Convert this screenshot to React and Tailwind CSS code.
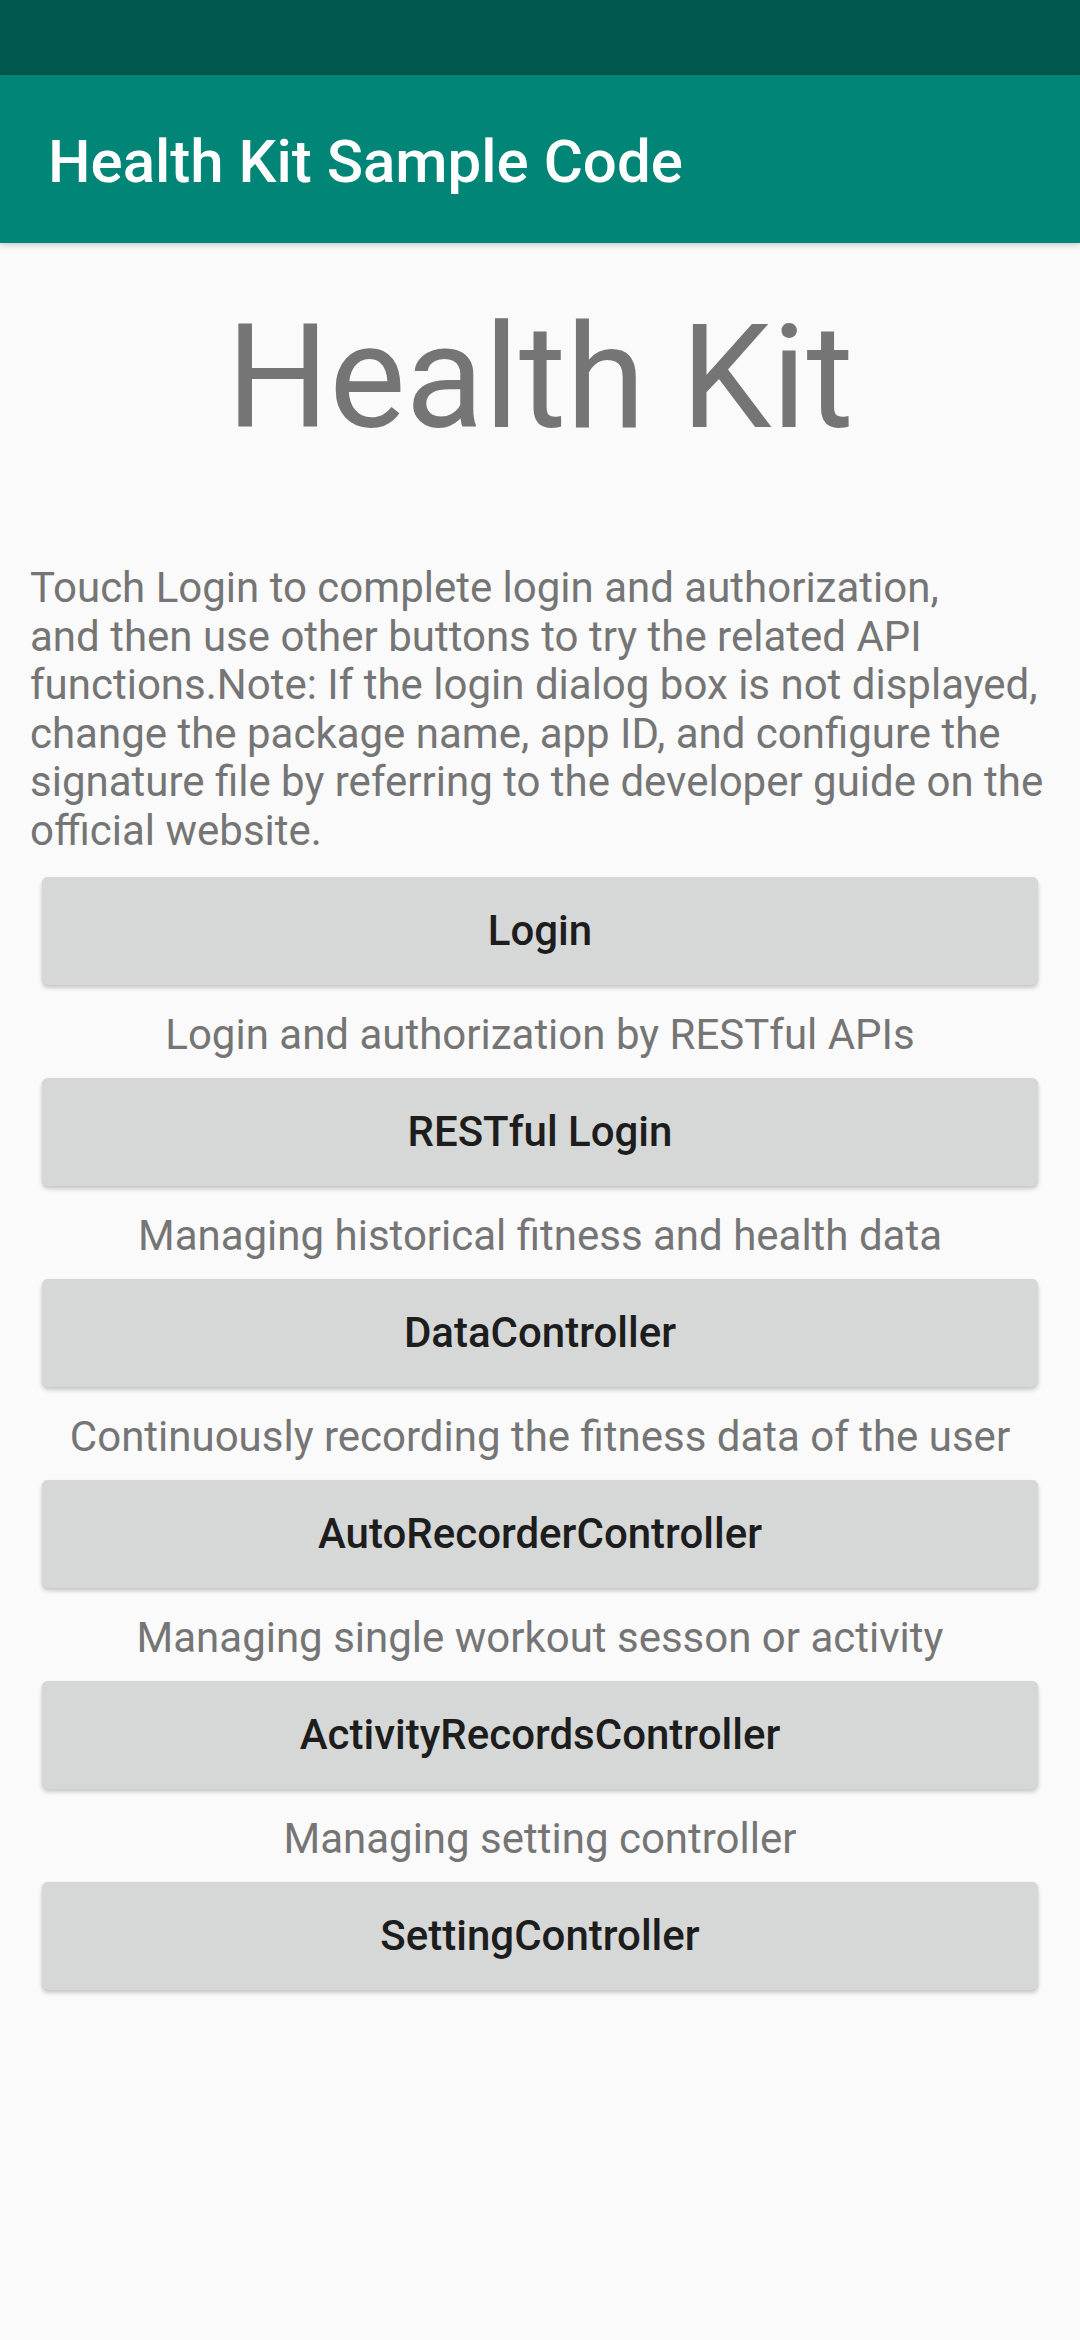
import React from "react";

const items = [
  { label: "Login", caption: "Login and authorization by RESTful APIs" },
  { label: "RESTful Login", caption: "Managing historical fitness and health data" },
  { label: "DataController", caption: "Continuously recording the fitness data of the user" },
  { label: "AutoRecorderController", caption: "Managing single workout sesson or activity" },
  { label: "ActivityRecordsController", caption: "Managing setting controller" },
  { label: "SettingController", caption: null },
];

function ActionButton({ label }) {
  return (
    <div className="px-[12px] py-[18px]">
      <button className="w-full h-[108px] rounded-[6px] bg-[#D6D7D7] text-[42px] font-medium text-[#1d1d1d] shadow-[0_3px_4px_rgba(0,0,0,0.2),0_0_1px_rgba(0,0,0,0.12)]">
        {label}
      </button>
    </div>
  );
}

export default function App() {
  return (
    <div className="min-h-screen bg-[#FAFAFA] font-['Roboto',sans-serif]">
      {/* status bar */}
      <div className="h-[75px] bg-[#00574B]" />

      {/* toolbar */}
      <div className="h-[168px] bg-[#008577] flex items-center pl-[48px] pt-[5px] shadow-[0_2px_6px_rgba(0,0,0,0.2)] relative">
        <h1 className="text-[60px] leading-[70px] font-medium text-white">
          Health Kit Sample Code
        </h1>
      </div>

      <div className="px-[30px]">
        <div className="mt-[50px] text-center text-[144px] leading-[169px] text-[#757575]">
          Health Kit
        </div>

        <p className="mt-[102px] text-[42px] leading-[48.6px] text-[#757575]">
          Touch Login to complete login and authorization,
          <br />
          and then use other buttons to try the related API functions.Note: If the login dialog box is not displayed, change the package name, app ID, and configure the signature file by referring to the developer guide on the official website.
        </p>

        <div className="mt-[3px]">
          {items.map((item) => (
            <div key={item.label}>
              <ActionButton label={item.label} />
              {item.caption && (
                <div className="h-[57px] pt-[7px] text-center text-[42px] leading-[50px] text-[#757575] whitespace-nowrap">
                  {item.caption}
                </div>
              )}
            </div>
          ))}
        </div>
      </div>
    </div>
  );
}
